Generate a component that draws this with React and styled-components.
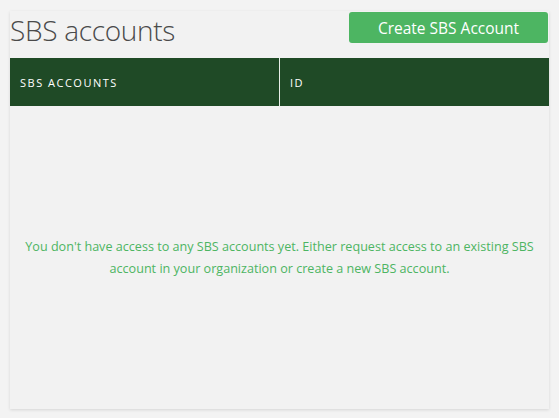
import React from 'react'
import styled, { createGlobalStyle } from 'styled-components'

const GlobalStyle = createGlobalStyle`
	html, body {
		margin: 0;
		padding: 0;
		background: #f3f3f3;
		font-family: 'Open Sans', 'Noto Sans', sans-serif;
	}
`

const Page = styled.div`
	padding: 11px 10px 10px 10px;
`

const Card = styled.div`
	background: #f2f2f2;
	box-shadow: 0 1px 3px rgba(0, 0, 0, 0.12);
	height: 398px;
	display: flex;
	flex-direction: column;
`

const Toolbar = styled.div`
	display: flex;
	justify-content: space-between;
	align-items: flex-start;
	height: 47px;
`

const Title = styled.h1`
	margin: 0;
	font-family: 'Open Sans', sans-serif;
	font-weight: 300;
	font-size: 28px;
	line-height: 38px;
	color: #4a4a4a;
	letter-spacing: -0.3px;
`

const CreateButton = styled.button`
	margin: 1px 1px 0 0;
	width: 199px;
	height: 31px;
	border: none;
	border-radius: 3px;
	background: #4db562;
	color: #ffffff;
	font-family: 'Open Sans', sans-serif;
	font-size: 15.5px;
	cursor: pointer;
`

const HeaderRow = styled.div`
	display: grid;
	grid-template-columns: 269px 1fr;
	height: 48px;
	background: #1f4a26;
`

const HeaderCell = styled.div`
	display: flex;
	align-items: center;
	padding-left: 10px;
	color: #ffffff;
	font-family: 'Open Sans', sans-serif;
	font-size: 11px;
	font-weight: 500;
	letter-spacing: 1.5px;
	text-transform: uppercase;
	border-left: ${(p) => (p.divided ? '1px solid #e8efe8' : 'none')};
`

const EmptyBody = styled.div`
	flex: 1;
	display: flex;
	align-items: center;
	justify-content: center;
`

const Message = styled.p`
	margin: 0;
	max-width: 530px;
	text-align: center;
	color: #4db562;
	font-family: 'Open Sans', sans-serif;
	font-size: 12.6px;
	line-height: 22px;
`

const App = () => {
	return (
		<>
			<GlobalStyle />
			<Page>
				<Card>
					<Toolbar>
						<Title>SBS accounts</Title>
						<CreateButton>Create SBS Account</CreateButton>
					</Toolbar>
					<HeaderRow>
						<HeaderCell>SBS Accounts</HeaderCell>
						<HeaderCell divided>ID</HeaderCell>
					</HeaderRow>
					<EmptyBody>
						<Message>
							You don't have access to any SBS accounts yet. Either request access to an existing SBS
							account in your organization or create a new SBS account.
						</Message>
					</EmptyBody>
				</Card>
			</Page>
		</>
	)
}

export default App
